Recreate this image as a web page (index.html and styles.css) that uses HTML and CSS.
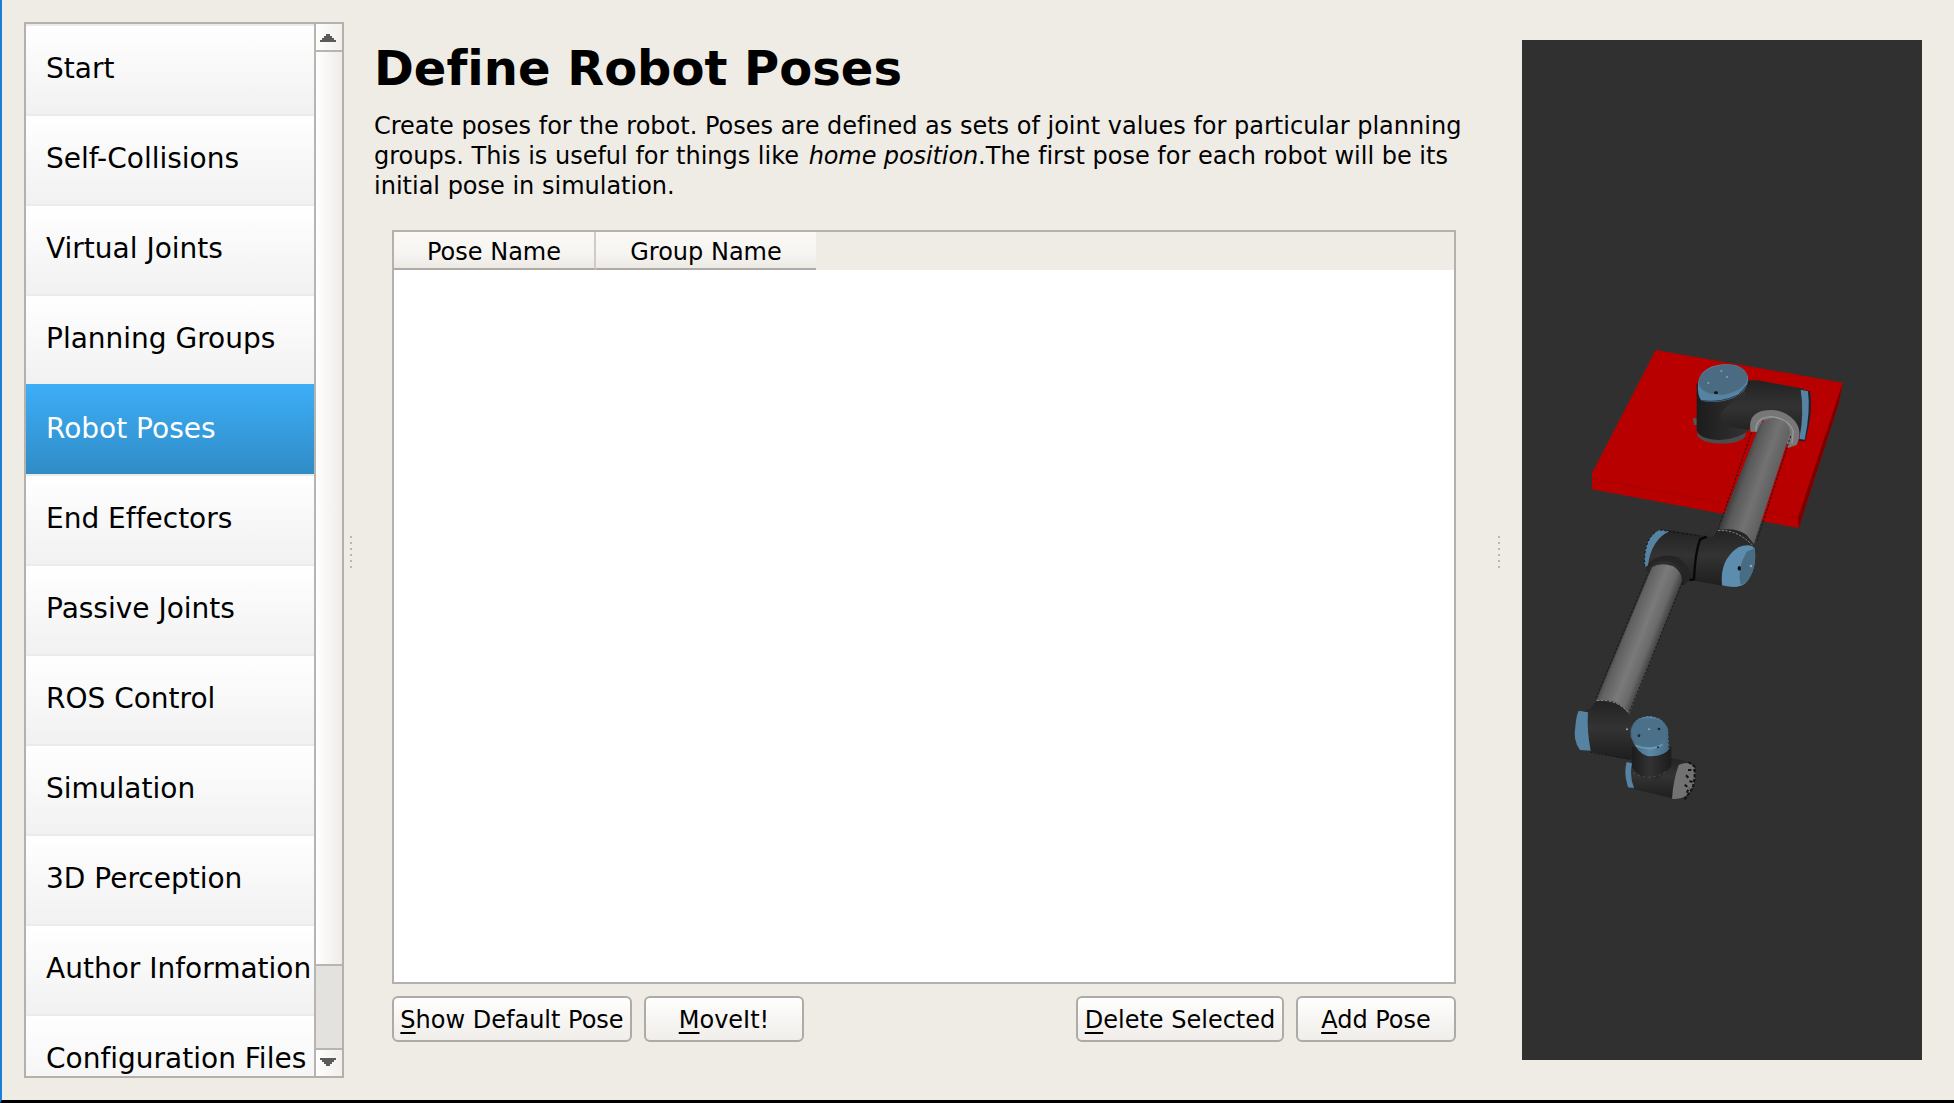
FILE: index.html
```
<!DOCTYPE html>
<html lang="en">
<head>
<meta charset="utf-8">
<title>Define Robot Poses</title>
<link rel="stylesheet" href="styles.css">
</head>
<body>
<div class="window">
  <nav class="sidebar">
    <ul class="steps">
      <li class="step">Start</li>
      <li class="step">Self-Collisions</li>
      <li class="step">Virtual Joints</li>
      <li class="step">Planning Groups</li>
      <li class="step selected">Robot Poses</li>
      <li class="step">End Effectors</li>
      <li class="step">Passive Joints</li>
      <li class="step">ROS Control</li>
      <li class="step">Simulation</li>
      <li class="step">3D Perception</li>
      <li class="step">Author Information</li>
      <li class="step">Configuration Files</li>
    </ul>
    <div class="scrollbar">
      <div class="arrow up"><svg width="16" height="8" viewBox="0 0 16 8"><path d="M6 0h4v2h2v2h2v2h2v2H0V6h2V4h2V2h2z" fill="#5c5a58"/></svg></div>
      <div class="thumb"></div>
      <div class="trough"></div>
      <div class="arrow down"><svg width="16" height="8" viewBox="0 0 16 8"><path d="M0 0h16v2h-2v2h-2v2h-2v2H6V6H4V4H2V2H0z" fill="#5c5a58"/></svg></div>
    </div>
  </nav>
  <div class="splitter"><i></i><i></i><i></i><i></i><i></i><i></i></div>
  <main class="content">
    <h1 class="title">Define Robot Poses</h1>
    <p class="intro">Create poses for the robot. Poses are defined as sets of joint values for particular planning<br>groups. This is useful for things like <em>home position</em>.The first pose for each robot will be its<br>initial pose in simulation.</p>
    <div class="table">
      <div class="header">
        <div class="col name">Pose Name</div>
        <div class="col group">Group Name</div>
      </div>
      <div class="rows"></div>
    </div>
    <div class="actions">
      <button class="btn show"><u>S</u>how Default Pose</button>
      <button class="btn moveit"><u>M</u>oveIt!</button>
      <button class="btn delete"><u>D</u>elete Selected</button>
      <button class="btn add"><u>A</u>dd Pose</button>
    </div>
  </main>
  <div class="splitter"><i></i><i></i><i></i><i></i><i></i><i></i></div>
  <div class="viewport">
    <svg width="400" height="1020" viewBox="0 0 400 1020">
      <defs>
        <linearGradient id="tubeA" gradientUnits="userSpaceOnUse" x1="535" y1="425" x2="665" y2="470">
          <stop offset="0" stop-color="#3a3a3a"/><stop offset=".18" stop-color="#5a5a5a"/><stop offset=".5" stop-color="#727272"/><stop offset=".8" stop-color="#606060"/><stop offset="1" stop-color="#333"/>
        </linearGradient>
        <linearGradient id="tubeB" gradientUnits="userSpaceOnUse" x1="180" y1="400" x2="295" y2="445">
          <stop offset="0" stop-color="#404040"/><stop offset=".15" stop-color="#606060"/><stop offset=".5" stop-color="#7a7a7a"/><stop offset=".75" stop-color="#6a6a6a"/><stop offset="1" stop-color="#333"/>
        </linearGradient>
        <linearGradient id="dark" x1="0" y1="0" x2="0" y2="1">
          <stop offset="0" stop-color="#222"/><stop offset=".45" stop-color="#333"/><stop offset="1" stop-color="#1d1d1d"/>
        </linearGradient>
        <linearGradient id="post" x1="0" y1="0" x2="1" y2="0">
          <stop offset="0" stop-color="#1c1c1c"/><stop offset=".45" stop-color="#323232"/><stop offset="1" stop-color="#1c1c1c"/>
        </linearGradient>
        <linearGradient id="blue" x1="0" y1="0" x2="1" y2="0">
          <stop offset="0" stop-color="#44657c"/><stop offset=".5" stop-color="#5c89a8"/><stop offset="1" stop-color="#466981"/>
        </linearGradient>
      </defs>
      <g transform="translate(38 290) scale(.33333)">
        <path d="M287 60L848 158L836 222L716 594L96 478V430z" fill="#b90000"/>
        <path d="M848 158L836 222L716 594L714 562z" fill="#7c0000"/>
        <path d="M96 446L714 562" stroke="#ad0000" stroke-width="5" fill="none"/>
        <path d="M398 265h16v20h-12z" fill="#555"/>
        <path d="M412 290V318Q430 342 495 341Q548 338 558 315L552 280z" fill="#4c4c4c"/>
        <path d="M410 160V302Q422 328 480 330Q535 326 565 302L600 265L725 260L745 185L570 150z" fill="url(#post)"/>
        <path d="M555 158Q575 146 610 154L730 176L742 300L715 325L690 262Q640 225 585 252Q570 262 568 300L515 292Q470 280 485 245Q510 215 555 200z" fill="url(#dark)"/>
        <path d="M722 177L750 184Q760 245 735 334L716 333Q733 260 722 177z" fill="#18232b"/>
        <path d="M722 179L744 184Q752 245 734 329L718 327Q733 250 722 179z" fill="#5683a2"/>
        <path d="M414 160Q420 110 490 103Q550 98 564 140Q568 180 520 204Q470 223 425 212Q411 200 414 160z" fill="#5683a2"/>
        <ellipse cx="489" cy="149" rx="74" ry="44" transform="rotate(-9 489 149)" fill="#4b6b82"/>
        <path d="M425 212Q482 220 535 195L564 162" fill="none" stroke="#253744" stroke-width="3"/>
        <g fill="#8ba1ae"><circle cx="484" cy="123" r="3"/><circle cx="501" cy="141" r="3"/><circle cx="445" cy="159" r="3"/></g>
        <ellipse cx="468" cy="188" rx="6" ry="4" fill="#111"/>
        <path d="M572 305Q562 252 610 242Q668 232 704 272Q730 305 710 345L684 354L670 296L608 270L592 306z" fill="#777"/>
        <path d="M588 302Q586 262 634 260Q688 266 700 304L696 340" fill="none" stroke="#999" stroke-width="4"/>
        <path d="M596 292Q604 268 640 264Q690 272 690 310L582 642L474 600z" fill="url(#tubeA)"/>
        <path d="M574 308L470 612M692 318L590 636" fill="none" stroke="#171717" stroke-width="3" stroke-dasharray="7 5"/>
      </g>
      <g transform="translate(38 460) scale(.33333)">
        <path d="M255 196Q250 105 302 88L340 92L420 105L458 112L474 90Q530 82 560 105L584 135L580 210L540 262L480 256L388 240L370 256L260 215z" fill="url(#dark)"/>
        <path d="M474 92Q528 86 578 136" fill="none" stroke="#888" stroke-width="3" stroke-dasharray="7 4"/>
        <path d="M254 202Q248 110 300 89L328 94Q274 120 264 196z" fill="#5683a2"/>
        <path d="M300 90L420 108M254 200Q250 120 290 94" fill="none" stroke="#111" stroke-width="3" stroke-dasharray="7 6"/>
        <path d="M440 110L420 118Q405 160 402 238L388 240" fill="none" stroke="#080808" stroke-width="7"/>
        <path d="M262 205Q310 165 355 198Q376 218 372 253L389 238Q390 195 355 172Q300 155 266 190z" fill="#252525"/>
        <path d="M486 256Q478 180 535 142Q570 128 584 145Q592 205 560 246Q540 270 486 256z" fill="#5d8dae"/>
        <path d="M584 145Q592 205 560 246L542 255Q530 205 560 155z" fill="#486c84"/>
        <ellipse cx="538" cy="205" rx="5" ry="7" fill="#111"/><circle cx="573" cy="198" r="4" fill="#91a9b8"/>
        <path d="M276 202Q302 185 340 199Q366 216 366 243L208 646Q180 602 108 602z" fill="url(#tubeB)"/>
        <path d="M262 222L106 600M366 250L207 640" fill="none" stroke="#171717" stroke-width="3" stroke-dasharray="6 6"/>
        <path d="M72 634L92 624L108 604Q170 590 204 640L210 660L322 672L330 780L242 784L180 774L72 750z" fill="url(#dark)"/>
        <path d="M110 602Q170 596 205 638" fill="none" stroke="#8b8b8b" stroke-width="3" stroke-dasharray="8 4"/>
        <path d="M56 632L84 637Q80 690 92 752L60 750Q38 720 46 680Q48 650 56 632z" fill="#5683a2"/>
        <path d="M92 757L210 778" fill="none" stroke="#151515" stroke-width="3" stroke-dasharray="6 5"/>
        <path d="M213 770L334 774L390 786L398 850L350 898L222 868z" fill="url(#dark)"/>
        <path d="M200 786L216 790Q208 830 222 864L204 862Q190 820 200 786z" fill="#5683a2"/>
        <path d="M216 740H334V800L280 846Q240 836 216 800z" fill="url(#post)"/>
        <path d="M218 818Q270 848 320 812" fill="none" stroke="#4b4b4b" stroke-width="3" stroke-dasharray="8 8"/>
        <path d="M356 795Q384 782 402 798Q412 830 398 862Q380 902 336 896Q340 840 356 795z" fill="#727272"/>
        <path d="M386 786L404 800V835L398 864L374 898M384 810h16M378 826l8 8M388 844l14 2M374 854l10 8M380 878l8-14" fill="none" stroke="#121212" stroke-width="6" stroke-dasharray="10 5"/>
        <path d="M212 690Q222 650 266 648Q312 650 325 690L328 746Q310 772 262 768Q230 758 212 710z" fill="url(#blue)"/>
        <ellipse cx="267" cy="698" rx="53" ry="43" fill="#4b7089"/>
        <path d="M226 736Q266 756 308 734" fill="none" stroke="#6e9cba" stroke-width="4"/>
        <g fill="#182731"><circle cx="237" cy="707" r="4"/><circle cx="297" cy="687" r="4"/><circle cx="294" cy="742" r="3"/></g>
        <g fill="#98a8b1"><circle cx="267" cy="688" r="3"/><circle cx="201" cy="688" r="3"/></g>
        <path d="M214 676Q230 650 266 648Q300 650 320 676M326 690V750" fill="none" stroke="#20303b" stroke-width="3" stroke-dasharray="5 7"/>
      </g>
    </svg>
  </div>
</div>
</body>
</html>
```
FILE: styles.css
```
* { box-sizing: border-box; }
body {
  margin: 0;
  background: #efece6;
  font-family: "DejaVu Sans", sans-serif;
  font-size: 24px;
  font-variant-ligatures: none;
  color: #000;
}
.window {
  display: flex;
  height: 1103px;
  padding-left: 22px;
  border-left: 2px solid #1a7fd6;
  border-bottom: 3px solid #000;
  overflow: hidden;
}
.sidebar {
  display: flex;
  width: 320px;
  height: 1056px;
  margin-top: 22px;
  border: 2px solid #b4b1ac;
  background: #fff;
}
.steps {
  flex: 1;
  margin: 0;
  padding: 0;
  list-style: none;
  overflow: hidden;
}
.step {
  height: 90px;
  padding: 0 0 0 20px;
  border-top: 2px solid #ebebeb;
  background: linear-gradient(#fff, #f1f1f1);
  font-size: 28px;
  line-height: 86px;
  white-space: nowrap;
}
.step.selected {
  border-top: 0;
  background: linear-gradient(#3daef7, #308cc6);
  color: #fff;
  line-height: 90px;
}
.scrollbar {
  display: flex;
  flex-direction: column;
  width: 28px;
  border-left: 2px solid #b8b5b0;
}
.arrow {
  display: flex;
  justify-content: center;
  align-items: center;
  height: 28px;
  padding-right: 2px;
  background: linear-gradient(90deg, #fefefd, #f2efec);
}
.arrow.up { padding-top: 2px; border-bottom: 2px solid #b8b5b0; }
.arrow.down { padding-bottom: 2px; border-top: 2px solid #b8b5b0; }
.thumb {
  height: 914px;
  border-bottom: 2px solid #b8b5b0;
  background: linear-gradient(90deg, #fff, #efece8);
}
.trough { flex: 1; background: #e4e2de; }
.splitter {
  display: flex;
  flex-direction: column;
  gap: 4px;
  width: 14px;
  padding: 536px 0 0 6px;
}
.splitter i { width: 2px; height: 2px; background: #bab7b2; }
.content {
  display: flex;
  flex-direction: column;
  width: 1134px;
  padding: 38px 36px 58px 16px;
}
.title {
  margin: 0;
  font-size: 48px;
  line-height: 60px;
  white-space: nowrap;
}
.intro { margin: 13px 0 29px; line-height: 30px; white-space: nowrap; }
.intro em { margin-left: 2px; letter-spacing: -.1px; }
.table {
  display: flex;
  flex-direction: column;
  height: 754px;
  margin-left: 18px;
  border: 2px solid #b4b1ac;
}
.header { display: flex; height: 38px; background: #efece6; }
.col {
  display: flex;
  justify-content: center;
  background: linear-gradient(#fbf9f6, #f7f5f1 60%, #edeae6);
  border-bottom: 2px solid #aeaaa6;
  line-height: 40px;
}
.col.name { width: 202px; border-right: 2px solid #cfccc8; }
.col.group { width: 220px; }
.rows { flex: 1; background: #fff; }
.actions { display: flex; gap: 12px; margin: 12px 0 0 18px; }
.btn {
  height: 46px;
  padding: 2px 0 0;
  border: 2px solid #aeaaa6;
  border-radius: 6px;
  background: linear-gradient(#fff, #f0edea);
  font: inherit;
  color: inherit;
  white-space: nowrap;
}
.btn u { text-underline-offset: 4px; text-decoration-thickness: 2px; }
.show { width: 240px; }
.moveit { width: 160px; }
.delete { width: 208px; margin-left: auto; }
.add { width: 160px; }
.viewport { width: 400px; height: 1020px; margin: 40px 0 0 16px; background: #303030; }
.viewport svg { display: block; }
```
